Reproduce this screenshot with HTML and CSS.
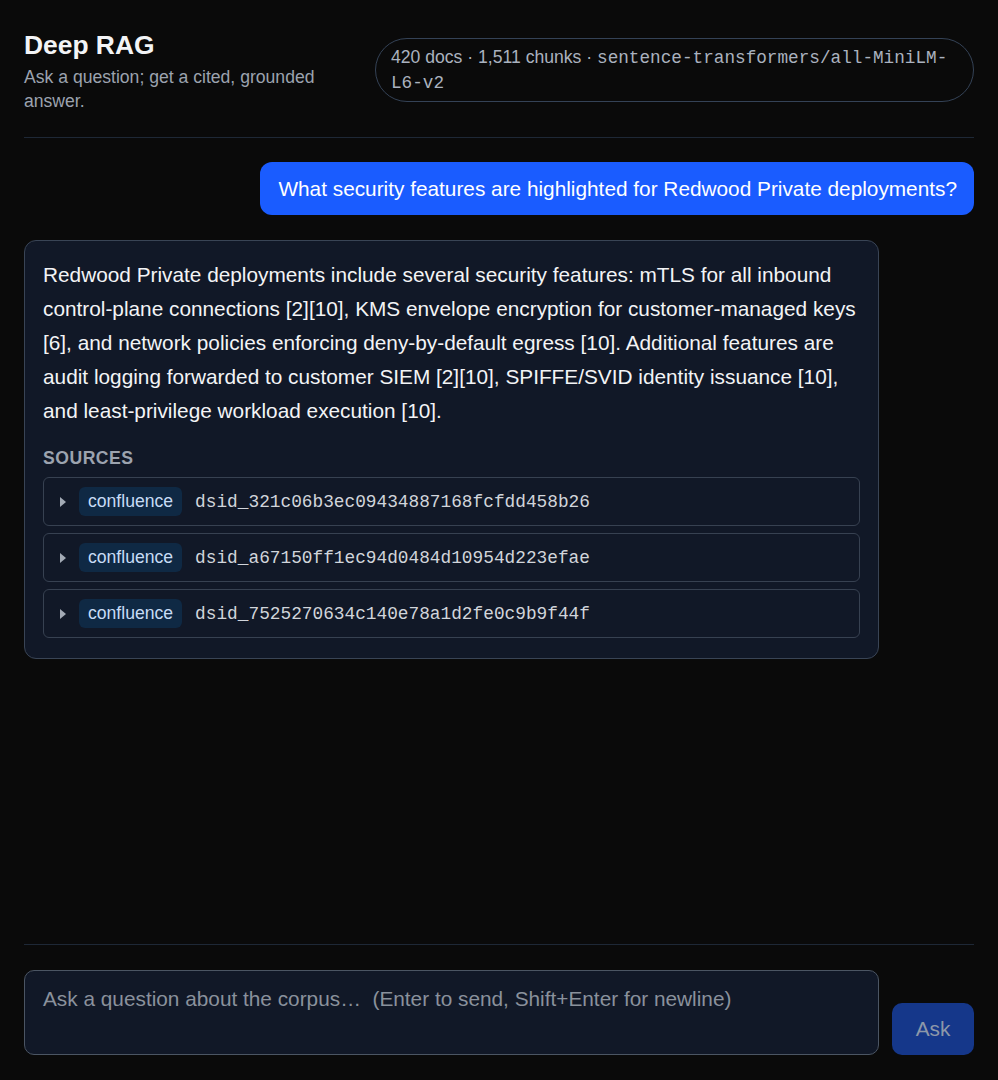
FILE: index.html
```html
<!DOCTYPE html>
<html lang="en">
<head>
<meta charset="utf-8">
<title>Deep RAG</title>
<link rel="stylesheet" href="styles.css">
</head>
<body>
<div class="app">
  <header class="header">
    <div class="brand">
      <h1 class="title">Deep RAG</h1>
      <p class="subtitle">Ask a question; get a cited, grounded answer.</p>
    </div>
    <div class="stats">420 docs · 1,511 chunks · <span class="mono">sentence-transformers/all-MiniLM-L6-v2</span></div>
  </header>

  <main class="chat">
    <div class="user-row">
      <div class="user-bubble">What security features are highlighted for Redwood Private deployments?</div>
    </div>

    <div class="answer">
      <p class="answer-text">Redwood Private deployments include several security features: mTLS for all inbound control-plane connections [2][10], KMS envelope encryption for customer-managed keys [6], and network policies enforcing deny-by-default egress [10]. Additional features are audit logging forwarded to customer SIEM [2][10], SPIFFE/SVID identity issuance [10], and least-privilege workload execution [10].</p>
      <div class="sources-label">Sources</div>
      <div class="sources">
        <div class="source"><span class="caret"></span><span class="tag">confluence</span><span class="doc-id">dsid_321c06b3ec09434887168fcfdd458b26</span></div>
        <div class="source"><span class="caret"></span><span class="tag">confluence</span><span class="doc-id">dsid_a67150ff1ec94d0484d10954d223efae</span></div>
        <div class="source"><span class="caret"></span><span class="tag">confluence</span><span class="doc-id">dsid_7525270634c140e78a1d2fe0c9b9f44f</span></div>
      </div>
    </div>
  </main>

  <footer class="composer">
    <textarea class="input" placeholder="Ask a question about the corpus…  (Enter to send, Shift+Enter for newline)"></textarea>
    <button class="ask" disabled>Ask</button>
  </footer>
</div>
</body>
</html>
```

FILE: styles.css
```css
* { box-sizing: border-box; }
html, body {
  margin: 0;
  padding: 0;
  height: 100%;
  background: #0a0a0a;
  color: #e5e7eb;
  font-family: "Liberation Sans", Arial, sans-serif;
}
.app {
  height: 100vh;
  display: flex;
  flex-direction: column;
  padding: 0 24px;
}
.header {
  display: flex;
  align-items: flex-start;
  gap: 16px;
  padding: 30px 0 24px;
  border-bottom: 1px solid #1e2836;
}
.brand { width: 335px; flex-shrink: 0; }
.title {
  margin: 0;
  font-size: 26.4px;
  line-height: 30px;
  font-weight: 700;
  color: #f3f4f6;
}
.subtitle {
  margin: 5px 0 0;
  font-size: 17.6px;
  line-height: 24px;
  color: #9ca3af;
}
.stats {
  flex: 1;
  margin-top: 8px;
  border: 1px solid #344256;
  border-radius: 32px;
  padding: 6px 15px;
  font-size: 17.6px;
  line-height: 24px;
  color: #aab2bf;
}
.mono {
  font-family: "Liberation Mono", "DejaVu Sans Mono", monospace;
  font-size: 17.7px;
}
.chat {
  flex: 1;
  display: flex;
  flex-direction: column;
  gap: 25px;
  padding-top: 24px;
}
.user-row { display: flex; justify-content: flex-end; }
.user-bubble {
  background: #1a5cff;
  color: #ffffff;
  font-size: 20.8px;
  line-height: 29px;
  padding: 12px 17px 12px 18px;
  border-radius: 12px;
}
.answer {
  width: 90%;
  background: #111827;
  border: 1px solid #394455;
  border-radius: 12px;
  padding: 17px 18px 20px;
}
.answer-text {
  margin: 0;
  font-size: 20.8px;
  line-height: 34px;
  color: #f3f4f6;
}
.sources-label {
  margin-top: 20px;
  font-size: 17.6px;
  line-height: 20px;
  font-weight: 700;
  letter-spacing: 0.5px;
  text-transform: uppercase;
  color: #9ca3af;
}
.sources {
  display: flex;
  flex-direction: column;
  gap: 7px;
  margin-top: 9px;
}
.source {
  display: flex;
  align-items: center;
  border: 1px solid #374151;
  border-radius: 6px;
  padding: 9px 16px;
}
.caret {
  width: 0;
  height: 0;
  border-top: 5.5px solid transparent;
  border-bottom: 5.5px solid transparent;
  border-left: 6.5px solid #a3aab5;
  margin-right: 13px;
}
.tag {
  background: #0f2944;
  color: #c7dcf5;
  font-size: 17.6px;
  line-height: 29px;
  padding: 0 9px;
  border-radius: 6px;
}
.doc-id {
  margin-left: 13px;
  font-family: "Liberation Mono", "DejaVu Sans Mono", monospace;
  font-size: 17.8px;
  color: #d1d5db;
}
.composer {
  display: flex;
  align-items: flex-end;
  gap: 13px;
  padding: 25px 0 25px;
  border-top: 1px solid #1e2836;
}
.input {
  width: 90%;
  height: 85px;
  resize: none;
  background: #111827;
  border: 1px solid #4b5563;
  border-radius: 10px;
  padding: 14px 18px;
  font-family: "Liberation Sans", Arial, sans-serif;
  font-size: 20.8px;
  line-height: 28px;
  color: #e5e7eb;
  outline: none;
}
.input::placeholder { color: #8a919c; }
.ask {
  flex: 1;
  height: 52px;
  background: #15378a;
  color: #8d97a9;
  border: none;
  border-radius: 10px;
  font-family: "Liberation Sans", Arial, sans-serif;
  font-size: 20.8px;
}
```
